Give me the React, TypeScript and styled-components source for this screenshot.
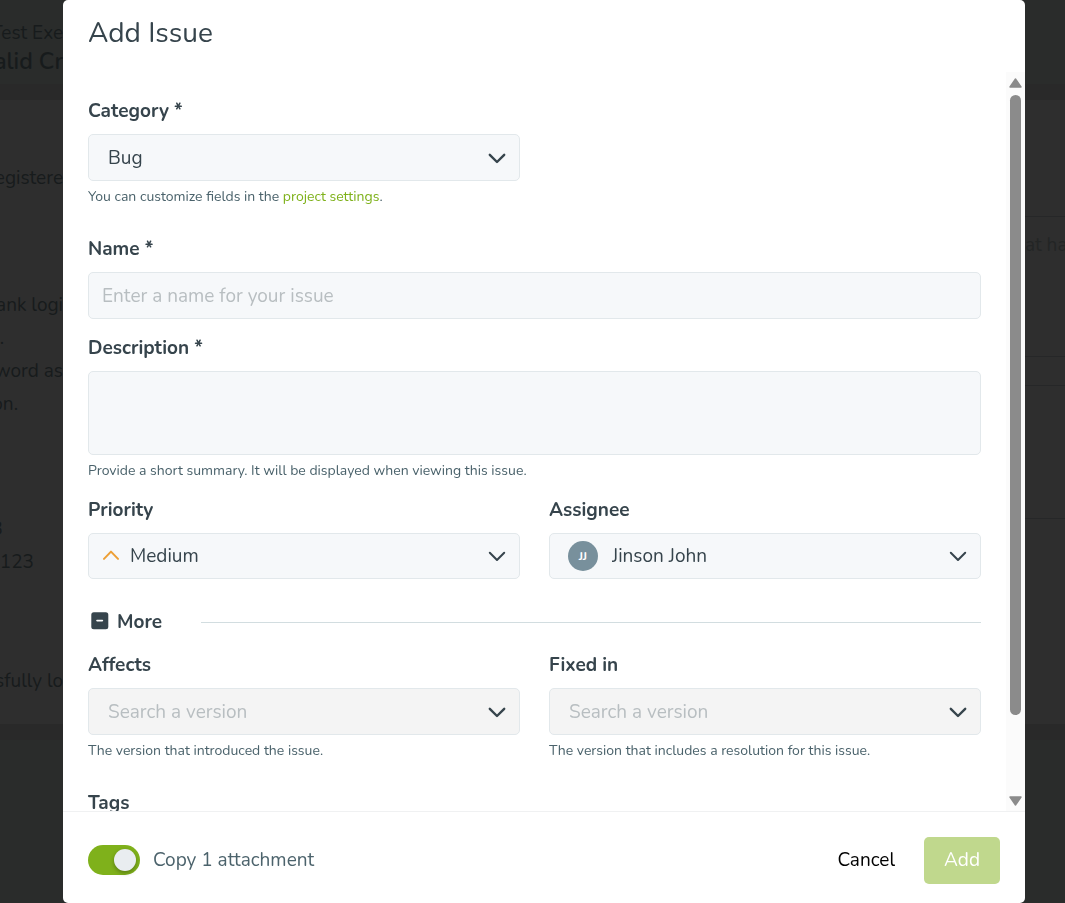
import React, { useState } from 'react';
import type { ReactNode } from 'react';
import styled, { createGlobalStyle } from 'styled-components';

const GlobalStyle = createGlobalStyle`
  *, *::before, *::after { box-sizing: border-box; }
  body {
    margin: 0;
    background: #2a2c2b;
    color: #36444c;
    font-family: Nunito, Lato, "Open Sans", sans-serif;
    font-size: 19px;
  }
  button, input, select, textarea { font: inherit; color: inherit; }
`;

/* Dimmed page behind the dialog */

const Page = styled.div`
  display: flex;
  flex-direction: column;
  gap: 16px;
  min-height: 100vh;
  overflow: hidden;
  background: #292929;
  color: #171b1c;
`;

const PageHeader = styled.header`
  height: 84px;
  padding-top: 17px;
  background: #2a2c2b;
`;

const PagePanel = styled.section`
  display: flex;
  justify-content: space-between;
  height: 624px;
  background: #2e2e2e;
`;

const PageFooter = styled.div`
  flex: 1;
  background: #2a2c2b;
`;

const PageColumn = styled.div`
  display: flex;
  flex-direction: column;
  width: 63px;
`;

/* A line that runs in from the left edge of the window and ends at $end */
const PageLine = styled.div<{ $end?: number; $space?: number }>`
  display: flex;
  justify-content: flex-end;
  width: ${(p) => p.$end ?? 63}px;
  margin-top: ${(p) => p.$space ?? 0}px;
  overflow: hidden;
  white-space: nowrap;
  line-height: 33px;
`;

const PageHeading = styled(PageLine)`
  font-size: 23px;
  font-weight: 600;
  line-height: 24px;
`;

const PageAside = styled.div`
  display: flex;
  flex-direction: column;
  width: 40px;
`;

const AsideCell = styled.div<{ $height: number }>`
  height: ${(p) => p.$height}px;
  padding-top: 12px;
  border-bottom: 1px solid #262728;
  overflow: hidden;
  white-space: nowrap;
  line-height: 33px;
  color: #232525;
`;

/* Dialog */

const Overlay = styled.div`
  position: fixed;
  inset: 0;
  display: flex;
  padding: 0 40px 0 63px;
`;

const Dialog = styled.form`
  flex: 1;
  display: flex;
  flex-direction: column;
  min-width: 0;
  border-radius: 5px;
  overflow: hidden;
  background: #fff;
`;

const Title = styled.h1`
  flex: none;
  height: 72px;
  margin: 0;
  padding: 15px 25px 0;
  font-size: 28px;
  line-height: 36px;
  font-weight: 400;
`;

const Body = styled.div`
  flex: 1;
  display: flex;
  min-height: 0;
`;

const Fields = styled.div`
  flex: 1;
  min-width: 0;
  padding: 26px 25px 0;
  overflow: hidden;
`;

const Track = styled.div`
  flex: none;
  display: flex;
  flex-direction: column;
  align-items: center;
  justify-content: space-between;
  width: 19px;
  padding: 6px 0 5px;
  background: #fbfbfb;
`;

const Thumb = styled.div`
  flex: 1;
  width: 11px;
  margin: 7px 0 81px;
  border-radius: 6px;
  background: #8b8b8b;
`;

const Grid = styled.div<{ $after: number }>`
  display: grid;
  grid-template-columns: 1fr 1fr;
  column-gap: 29px;
  margin-bottom: ${(p) => p.$after}px;
`;

const FieldBox = styled.div<{ $after?: number }>`
  display: flex;
  flex-direction: column;
  min-width: 0;
  margin-bottom: ${(p) => p.$after ?? 0}px;
`;

const Label = styled.label`
  margin-bottom: 10px;
  line-height: 26px;
  font-weight: 700;
`;

const Hint = styled.p`
  margin: 5px 0 0;
  font-size: 14px;
  line-height: 21px;
  color: #4a626b;
`;

const Link = styled.a`
  color: #7eb11a;
  text-decoration: none;
`;

const TextInput = styled.input`
  width: 100%;
  height: 47px;
  padding: 0 13px;
  border: 1px solid #e2e8eb;
  border-radius: 5px;
  background: #f6f8fa;
  outline: none;
  &::placeholder { color: #b8bec1; opacity: 1; }
`;

const TextArea = styled.textarea`
  display: block;
  width: 100%;
  height: 84px;
  padding: 10px 13px;
  border: 1px solid #e2e8eb;
  border-radius: 5px;
  background: #f6f8fa;
  outline: none;
  resize: none;
`;

const SelectShell = styled.div<{ $muted?: boolean; $compact?: boolean }>`
  display: grid;
  align-items: center;
  height: ${(p) => (p.$compact ? 46 : 47)}px;
  border: 1px solid #e2e8eb;
  border-radius: 5px;
  background: ${(p) => (p.$muted ? '#f4f4f4' : '#f6f8fa')};
  & > * { grid-area: 1 / 1; }
`;

const SelectInput = styled.select<{ $indent: number; $muted?: boolean; $compact?: boolean }>`
  appearance: none;
  width: 100%;
  height: 100%;
  padding: 0 48px ${(p) => (p.$compact ? 1 : 0)}px ${(p) => p.$indent}px;
  border: 0;
  background: transparent;
  outline: none;
  color: ${(p) => (p.$muted ? '#b8bec1' : '#36444c')};
`;

const Adornment = styled.span<{ $inset: number }>`
  display: flex;
  justify-self: start;
  margin-left: ${(p) => p.$inset}px;
  pointer-events: none;
`;

const Caret = styled.svg`
  justify-self: end;
  margin-right: 13px;
  pointer-events: none;
`;

const Avatar = styled.span`
  display: flex;
  align-items: center;
  justify-content: center;
  width: 30px;
  height: 30px;
  border-radius: 50%;
  background: #78909c;
  color: #fff;
  font-size: 12px;
  font-weight: 700;
`;

const MoreRow = styled.div`
  display: flex;
  align-items: center;
  height: 28px;
  margin-bottom: 16px;
`;

const MoreButton = styled.button`
  display: flex;
  align-items: center;
  gap: 8px;
  padding: 0 0 0 3px;
  border: 0;
  background: none;
  line-height: 24px;
  font-weight: 700;
  cursor: pointer;
`;

const Rule = styled.hr`
  flex: 1;
  height: 1px;
  margin: 0 0 0 39px;
  border: 0;
  background: #d2dde0;
`;

const Footer = styled.footer`
  flex: none;
  display: flex;
  align-items: center;
  height: 92px;
  padding: 5px 25px 0;
  border-top: 1px solid #f0f1f2;
`;

const ToggleLabel = styled.label`
  display: flex;
  align-items: center;
  gap: 13px;
  margin-right: auto;
  color: #4c636c;
  cursor: pointer;
`;

const Toggle = styled.input`
  appearance: none;
  display: flex;
  align-items: center;
  width: 52px;
  height: 30px;
  margin: 0;
  padding: 0 4px;
  border-radius: 15px;
  background: #b8bec1;
  cursor: pointer;
  &::before {
    content: "";
    width: 22px;
    height: 22px;
    border-radius: 50%;
    background: #e9edf0;
    box-shadow: 0 2px 4px rgba(0, 0, 0, 0.3);
  }
  &:checked {
    justify-content: flex-end;
    background: #7fb11b;
  }
`;

const Button = styled.button<{ $primary?: boolean }>`
  height: 47px;
  padding: 0 ${(p) => (p.$primary ? 20 : 29)}px;
  border: 0;
  border-radius: 5px;
  background: ${(p) => (p.$primary ? '#c0d88d' : 'transparent')};
  color: ${(p) => (p.$primary ? '#fff' : '#000')};
  cursor: pointer;
`;

function ChevronDown({ thin }: { thin?: boolean }) {
  return (
    <Caret width="18" height="12" viewBox="0 0 18 12" fill="none" aria-hidden="true">
      <path d="M1.8 2.8 9 10 16.2 2.8" stroke="#36444c" strokeWidth={thin ? 2 : 2.4} strokeLinecap="round" strokeLinejoin="round" />
    </Caret>
  );
}

function PriorityIcon() {
  return (
    <svg width="16" height="12" viewBox="0 0 16 12" fill="none" aria-hidden="true">
      <path d="M1 8.9 8 1.6 15 8.9" stroke="#ed9f35" strokeWidth="2" strokeLinecap="round" strokeLinejoin="round" />
    </svg>
  );
}

function CollapseIcon() {
  return (
    <svg width="18" height="20" viewBox="0 0 18 20" aria-hidden="true">
      <rect x="0.3" y="0.3" width="17" height="17" rx="2.5" fill="#36444c" />
      <path d="M6 8.6h5.4" stroke="#fff" strokeWidth="1.6" strokeLinecap="round" />
    </svg>
  );
}

function ScrollArrow({ down }: { down?: boolean }) {
  return (
    <svg width="13" height="10" viewBox="0 0 13 10" aria-hidden="true">
      <path
        d={down ? 'M1 1h11L6.5 9z' : 'M1 9h11L6.5 1z'}
        fill="#8b8b8b"
        stroke="#8b8b8b"
        strokeWidth="1.4"
        strokeLinejoin="round"
      />
    </svg>
  );
}

interface SelectFieldProps {
  id: string;
  label: string;
  value: string;
  indent?: number;
  muted?: boolean;
  compact?: boolean;
  adornment?: ReactNode;
  adornmentInset?: number;
  hint?: ReactNode;
}

function SelectField({ id, label, value, indent = 19, muted, compact, adornment, adornmentInset = 0, hint }: SelectFieldProps) {
  return (
    <FieldBox>
      <Label htmlFor={id}>{label}</Label>
      <SelectShell $muted={muted} $compact={compact}>
        <SelectInput id={id} $indent={indent} $muted={muted} $compact={compact} defaultValue={value}>
          <option>{value}</option>
        </SelectInput>
        {adornment && <Adornment $inset={adornmentInset}>{adornment}</Adornment>}
        <ChevronDown thin={compact} />
      </SelectShell>
      {hint && <Hint>{hint}</Hint>}
    </FieldBox>
  );
}

export default function App() {
  const [copy, setCopy] = useState(true);

  return (
    <>
      <GlobalStyle />
      <Page aria-hidden="true">
        <PageHeader>
          <PageLine>Test Exe</PageLine>
          <PageHeading>alid Cr</PageHeading>
        </PageHeader>
        <PagePanel>
          <PageColumn>
            <PageLine $space={62}>egistere</PageLine>
            <PageLine $space={94}>ank logi</PageLine>
            <PageLine $end={4}>.</PageLine>
            <PageLine>word as</PageLine>
            <PageLine $end={18}>on.</PageLine>
            <PageLine $end={3} $space={92}>3</PageLine>
            <PageLine $end={34}>123</PageLine>
            <PageLine $space={86}>sfully lo</PageLine>
          </PageColumn>
          <PageAside>
            <AsideCell $height={117} />
            <AsideCell $height={140}>at ha</AsideCell>
            <AsideCell $height={29} />
            <AsideCell $height={133} />
          </PageAside>
        </PagePanel>
        <PageFooter />
      </Page>

      <Overlay>
        <Dialog role="dialog" aria-labelledby="dialog-title" onSubmit={(e) => e.preventDefault()}>
          <Title id="dialog-title">Add Issue</Title>
          <Body>
            <Fields>
              <Grid $after={29}>
                <SelectField
                  id="category"
                  label="Category *"
                  value="Bug"
                  hint={<>You can customize fields in the <Link href="#settings">project settings</Link>.</>}
                />
              </Grid>
              <FieldBox $after={16}>
                <Label htmlFor="name">Name *</Label>
                <TextInput id="name" placeholder="Enter a name for your issue" />
              </FieldBox>
              <FieldBox $after={16}>
                <Label htmlFor="description">Description *</Label>
                <TextArea id="description" />
                <Hint>Provide a short summary. It will be displayed when viewing this issue.</Hint>
              </FieldBox>
              <Grid $after={29}>
                <SelectField
                  id="priority"
                  label="Priority"
                  value="Medium"
                  compact
                  indent={41}
                  adornment={<PriorityIcon />}
                  adornmentInset={14}
                />
                <SelectField
                  id="assignee"
                  label="Assignee"
                  value="Jinson John"
                  compact
                  indent={62}
                  adornment={<Avatar>JJ</Avatar>}
                  adornmentInset={18}
                />
              </Grid>
              <MoreRow>
                <MoreButton type="button" aria-expanded="true">
                  <CollapseIcon />
                  More
                </MoreButton>
                <Rule />
              </MoreRow>
              <Grid $after={29}>
                <SelectField id="affects" label="Affects" value="Search a version" muted hint="The version that introduced the issue." />
                <SelectField id="fixed-in" label="Fixed in" value="Search a version" muted hint="The version that includes a resolution for this issue." />
              </Grid>
              <FieldBox>
                <Label htmlFor="tags">Tags</Label>
                <TextInput id="tags" />
              </FieldBox>
            </Fields>
            <Track aria-hidden="true">
              <ScrollArrow />
              <Thumb />
              <ScrollArrow down />
            </Track>
          </Body>
          <Footer>
            <ToggleLabel>
              <Toggle type="checkbox" role="switch" checked={copy} onChange={(e) => setCopy(e.target.checked)} />
              Copy 1 attachment
            </ToggleLabel>
            <Button type="button">Cancel</Button>
            <Button type="submit" $primary>Add</Button>
          </Footer>
        </Dialog>
      </Overlay>
    </>
  );
}
